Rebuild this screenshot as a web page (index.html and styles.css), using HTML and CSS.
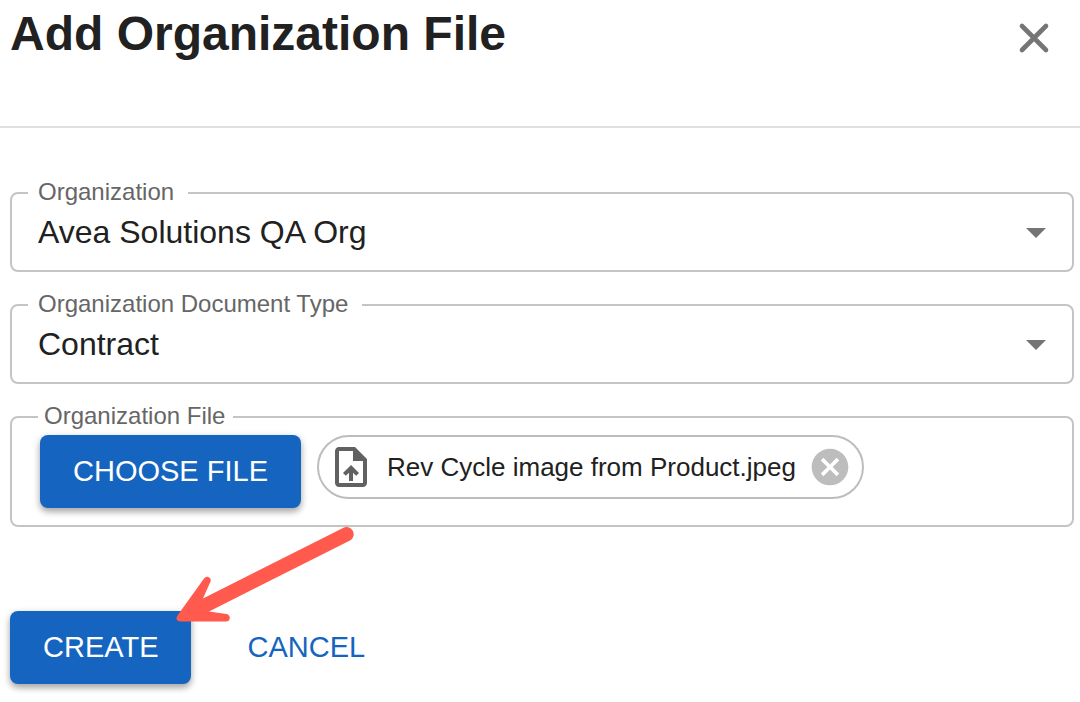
FILE: index.html
```html
<!DOCTYPE html>
<html lang="en">
<head>
<meta charset="utf-8">
<meta name="viewport" content="width=device-width, initial-scale=1">
<title>Add Organization File</title>
<link rel="stylesheet" href="styles.css">
</head>
<body>
<main class="dialog">
  <header class="dialog-header">
    <h1 class="dialog-title">Add Organization File</h1>
    <button class="icon-button" type="button" aria-label="Close">
      <svg class="close-icon" viewBox="0 0 24 24" aria-hidden="true"><path d="M6 6l12 12M18 6L6 18"/></svg>
    </button>
  </header>

  <form class="dialog-form">
    <fieldset class="field">
      <legend class="field-legend"><label for="organization">Organization</label></legend>
      <div class="select-wrap">
        <select class="select" id="organization"><option>Avea Solutions QA Org</option></select>
        <svg class="select-arrow" viewBox="0 0 24 24" aria-hidden="true"><path d="M7 10l5 5 5-5z"/></svg>
      </div>
    </fieldset>

    <fieldset class="field">
      <legend class="field-legend"><label for="document-type">Organization Document Type</label></legend>
      <div class="select-wrap">
        <select class="select" id="document-type"><option>Contract</option></select>
        <svg class="select-arrow" viewBox="0 0 24 24" aria-hidden="true"><path d="M7 10l5 5 5-5z"/></svg>
      </div>
    </fieldset>

    <fieldset class="field field-file">
      <legend class="field-legend file-legend">Organization File</legend>
      <div class="file-row">
        <button class="button button-filled" type="button">CHOOSE FILE</button>
        <div class="chip">
          <svg class="chip-icon" viewBox="0 0 24 24" aria-hidden="true"><path d="M14 2H6c-1.100 0-1.990.9-1.990 2L4 20c0 1.100.89 2 1.990 2H18c1.100 0 2-.9 2-2V8l-6-6zm4 18H6V4h7v5h5v11zM8 15.010l1.410 1.410L11 14.840V19h2v-4.160l1.590 1.590L16 15.010 12.010 11z"/></svg>
          <span class="chip-text">Rev Cycle image from Product.jpeg</span>
          <button class="chip-remove" type="button" aria-label="Remove file">
            <svg class="remove-icon" viewBox="0 0 24 24" aria-hidden="true"><path d="M12 2C6.470 2 2 6.470 2 12s4.470 10 10 10 10-4.470 10-10S17.530 2 12 2zm5 13.590L15.590 17 12 13.410 8.410 17 7 15.590 10.590 12 7 8.410 8.410 7 12 10.590 15.590 7 17 8.410 13.410 12 17 15.590z"/></svg>
          </button>
        </div>
      </div>
    </fieldset>

    <div class="actions">
      <button class="button button-filled" type="submit">CREATE</button>
      <button class="button button-text" type="button">CANCEL</button>
      <svg class="pointer" viewBox="170 520 190 110" aria-hidden="true"><path d="M343 528L203 598.500L210.500 581.500Q211.500 578.500 208.500 577Q206 576 204 578.500L177.500 615.500Q175.500 618.500 177.500 620.500Q178.500 621.500 181 621.500H226Q229.500 621.500 229.800 618Q230 615 226.500 614L209 611.500L350 540.500A7 7 0 0 0 343 528Z"/></svg>
    </div>
  </form>
</main>
</body>
</html>
```

FILE: styles.css
```css
* {
  box-sizing: border-box;
}

body {
  margin: 0;
  background: #fff;
  color: #212121;
  font-family: "Liberation Sans", Arial, sans-serif;
}

button {
  border: 0;
  font-family: inherit;
  cursor: pointer;
}

.dialog-header {
  display: flex;
  justify-content: space-between;
  align-items: flex-start;
  min-height: 128px;
  padding: 6px 22px 0 10px;
  border-bottom: 2px solid #e0e0e0;
}

.dialog-title {
  margin: 0;
  font-size: 48px;
  line-height: 56px;
}

.icon-button {
  display: flex;
  padding: 8px 0 0;
  background: none;
}

.close-icon {
  width: 48px;
  height: 48px;
  fill: none;
  stroke: #757575;
  stroke-width: 2.3;
  stroke-linecap: round;
}

.dialog-form {
  display: flex;
  flex-direction: column;
  gap: 20px;
  padding: 52px 6px 16px 10px;
}

.field {
  min-width: 0;
  margin: 0;
  padding: 0 0 12px 16px;
  border: 2px solid #c4c4c4;
  border-radius: 8px;
}

.field-legend {
  padding: 0 14px 2px 10px;
  color: #666;
  font-size: 24px;
  line-height: 24px;
}

.select-wrap {
  display: grid;
  align-items: center;
}

.select {
  grid-area: 1 / 1;
  width: 100%;
  height: 52px;
  padding: 0 64px 0 10px;
  border: 0;
  appearance: none;
  background: transparent;
  color: #212121;
  font-family: inherit;
  font-size: 32px;
}

.select-arrow {
  grid-area: 1 / 1;
  justify-self: end;
  width: 48px;
  height: 48px;
  margin-right: 12px;
  fill: #757575;
  pointer-events: none;
}

.field-file {
  padding: 0 12px 16px 26px;
}

.file-legend {
  padding: 0 8px 2px 6px;
}

.file-row {
  display: flex;
  align-items: flex-start;
  gap: 16px;
  padding: 5px 2px 1px;
}

.button {
  border-radius: 8px;
  padding: 16px 33px;
  font-size: 29px;
  line-height: 41px;
}

.button-filled {
  background: #1565c0;
  color: #fff;
  box-shadow: 0 4px 6px rgba(0, 0, 0, 0.26), 0 2px 8px rgba(0, 0, 0, 0.14);
}

.button-text {
  padding: 16px;
  background: none;
  color: #1565c0;
}

.chip {
  display: flex;
  align-items: center;
  height: 64px;
  padding: 0 10px 0 8px;
  border: 2px solid #bdbdbd;
  border-radius: 32px;
}

.chip-icon {
  width: 48px;
  height: 48px;
  fill: #616161;
}

.chip-text {
  padding: 0 12px;
  font-size: 26px;
  line-height: 32px;
  white-space: nowrap;
}

.chip-remove {
  display: flex;
  padding: 0;
  background: none;
}

.remove-icon {
  width: 44px;
  height: 44px;
  fill: #bdbdbd;
}

.actions {
  position: relative;
  display: flex;
  gap: 40px;
  padding-top: 64px;
}

.pointer {
  position: absolute;
  top: -27px;
  left: 160px;
  width: 190px;
  height: 110px;
  fill: #ff5a4d;
  pointer-events: none;
}
```
